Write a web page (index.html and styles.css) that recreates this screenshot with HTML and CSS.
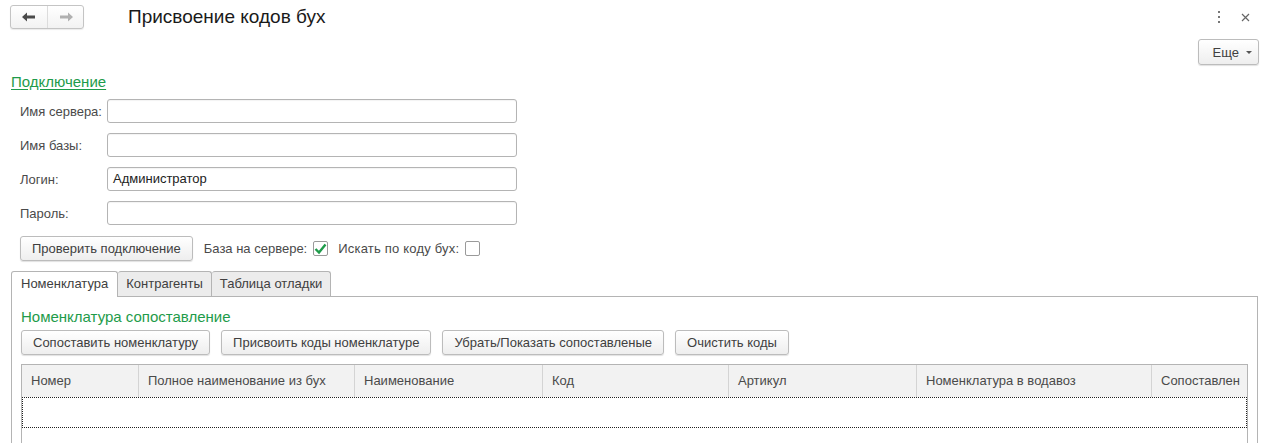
FILE: index.html
```html
<!DOCTYPE html>
<html lang="ru">
<head>
<meta charset="utf-8">
<title>Присвоение кодов бух</title>
<link rel="stylesheet" href="styles.css">
</head>
<body>
<div class="page">
  <header class="topbar">
    <div class="nav">
      <button class="nav-btn back" aria-label="Назад">
        <svg width="14" height="10" viewBox="0 0 14 10"><path d="M0 5 L5 0.5 L5 3.6 L13 3.6 L13 6.4 L5 6.4 L5 9.5 Z" fill="#4a4a4a"/></svg>
      </button>
      <button class="nav-btn fwd" aria-label="Вперед">
        <svg width="14" height="10" viewBox="0 0 14 10"><path d="M14 5 L9 0.5 L9 3.6 L1 3.6 L1 6.4 L9 6.4 L9 9.5 Z" fill="#b0b0b0"/></svg>
      </button>
    </div>
    <h1 class="title">Присвоение кодов бух</h1>
    <div class="win-actions">
      <span class="more-dots">
        <svg width="4" height="12" viewBox="0 0 4 12"><rect x="1" y="0" width="2" height="2" fill="#777"/><rect x="1" y="5" width="2" height="2" fill="#777"/><rect x="1" y="10" width="2" height="2" fill="#777"/></svg>
      </span>
      <span class="close">
        <svg width="9" height="9" viewBox="0 0 9 9"><path d="M1 1 L8 8 M8 1 L1 8" stroke="#666" stroke-width="1.2"/></svg>
      </span>
    </div>
  </header>

  <div class="cmdbar">
    <button class="btn more-btn">Еще <span class="caret"></span></button>
  </div>

  <section class="group">
    <a class="group-title" href="#">Подключение</a>
    <div class="fields">
      <div class="field"><label>Имя сервера:</label><div class="input"></div></div>
      <div class="field"><label>Имя базы:</label><div class="input"></div></div>
      <div class="field"><label>Логин:</label><div class="input">Администратор</div></div>
      <div class="field"><label>Пароль:</label><div class="input"></div></div>
    </div>
    <div class="check-row">
      <button class="btn">Проверить подключение</button>
      <span class="chk-label">База на сервере:</span>
      <span class="checkbox checked">
        <svg width="13" height="12" viewBox="0 0 13 12"><path d="M1.5 6 L5 9.5 L11.5 1.5" fill="none" stroke="#1e9b4a" stroke-width="2.4"/></svg>
      </span>
      <span class="chk-label second">Искать по коду бух:</span>
      <span class="checkbox"></span>
    </div>
  </section>

  <section class="tabs">
    <div class="tab-strip">
      <div class="tab active">Номенклатура</div>
      <div class="tab">Контрагенты</div>
      <div class="tab">Таблица отладки</div>
    </div>
    <div class="tab-panel">
      <div class="panel-title">Номенклатура сопоставление</div>
      <div class="btn-row">
        <button class="btn">Сопоставить номенклатуру</button>
        <button class="btn">Присвоить коды номенклатуре</button>
        <button class="btn">Убрать/Показать сопоставленые</button>
        <button class="btn">Очистить коды</button>
      </div>
      <div class="grid">
        <div class="grid-head">
          <div class="col c1">Номер</div>
          <div class="col c2">Полное наименование из бух</div>
          <div class="col c3">Наименование</div>
          <div class="col c4">Код</div>
          <div class="col c5">Артикул</div>
          <div class="col c6">Номенклатура в водавоз</div>
          <div class="col c7">Сопоставлен</div>
        </div>
        <div class="grid-row"></div>
        <div class="grid-rest"></div>
      </div>
    </div>
  </section>
</div>
</body>
</html>
```

FILE: styles.css
```css
* { box-sizing: border-box; }
html, body { margin: 0; padding: 0; background: #fff; }
body {
  font-family: "Liberation Sans", Arial, sans-serif;
  font-size: 13px;
  color: #4a4a4a;
  width: 1263px;
  height: 443px;
  overflow: hidden;
}

.topbar {
  display: flex;
  align-items: flex-start;
  height: 34px;
  padding: 5px 0 0 10px;
}
.nav {
  display: flex;
  border: 1px solid #c4c4c4;
  border-radius: 3px;
  background: linear-gradient(#ffffff, #f2f2f2);
  box-shadow: 0 1px 1px rgba(0,0,0,0.08);
  height: 24px;
}
.nav-btn {
  height: 22px;
  border: 0;
  background: transparent;
  padding: 0;
  display: flex;
  align-items: center;
  justify-content: center;
}
.nav-btn.back { border-right: 1px solid #dcdcdc; width: 37px; }
.nav-btn.fwd { width: 35px; }
.title {
  margin: 0 0 0 44px;
  font-size: 19px;
  font-weight: normal;
  color: #1a1a1a;
  line-height: 24px;
}
.win-actions {
  margin-left: auto;
  display: flex;
  align-items: center;
  gap: 20px;
  padding-right: 13px;
  height: 24px;
}
.more-dots, .close { display: flex; }

.cmdbar {
  display: flex;
  justify-content: flex-end;
  padding: 5px 4px 0 0;
  height: 70px;
}
.btn {
  font-family: "Liberation Sans", Arial, sans-serif;
  font-size: 13px;
  color: #404040;
  height: 25px;
  padding: 0 12px;
  border: 1px solid #bcbcbc;
  border-radius: 3px;
  background: linear-gradient(#ffffff, #eeeeee);
  box-shadow: 0 1px 1px rgba(0,0,0,0.12);
  line-height: 23px;
  white-space: nowrap;
}
.more-btn {
  height: 26px;
  padding: 0 6px 0 14px;
  display: flex;
  align-items: center;
  gap: 7px;
}
.caret {
  width: 0; height: 0;
  border-left: 3px solid transparent;
  border-right: 3px solid transparent;
  border-top: 3px solid #555;
  margin-top: 1px;
}

.group { padding: 0 0 0 11px; margin-top: -31px; }
.group-title {
  display: inline-block;
  font-size: 15px;
  color: #1e9b4a;
  text-decoration: underline;
  text-underline-offset: 2px;
  line-height: 18px;
  height: 20px;
}
.fields {
  display: flex;
  flex-direction: column;
  gap: 10px;
  margin-top: 6px;
  padding-left: 9px;
}
.field {
  display: flex;
  align-items: center;
  height: 24px;
}
.field label { width: 87px; color: #4a4a4a; }
.input {
  width: 410px;
  height: 24px;
  border: 1px solid #b4b4b4;
  border-radius: 3px;
  background: #fff;
  padding: 0 5px;
  line-height: 22px;
  color: #222;
  box-shadow: inset 0 1px 1px rgba(0,0,0,0.05);
}
.check-row {
  display: flex;
  align-items: center;
  margin-top: 11px;
  padding-left: 9px;
  height: 25px;
}
.check-row .btn { padding: 0 11px; }
.chk-label { margin-left: 11px; color: #4a4a4a; }
.chk-label.second { margin-left: 10px; letter-spacing: 0.2px; }
.checkbox {
  width: 15px;
  height: 15px;
  border: 1px solid #9a9a9a;
  border-radius: 2px;
  margin-left: 6px;
  background: #fff;
  display: flex;
  align-items: center;
  justify-content: center;
}

.tabs { margin-top: 10px; padding-left: 11px; padding-right: 5px; }
.tab-strip { display: flex; height: 25px; }
.tab {
  border: 1px solid #b4b4b4;
  border-bottom: 0;
  border-left: 0;
  background: #ececec;
  padding: 0 8px;
  line-height: 24px;
  color: #404040;
  border-radius: 3px 3px 0 0;
}
.tab:first-child { border-left: 1px solid #b4b4b4; }
.tab.active {
  background: #fff;
  position: relative;
  height: 26px;
  z-index: 1;
  padding: 0 9px;
}
.tab-panel {
  border: 1px solid #b4b4b4;
  border-bottom: 0;
  height: 150px;
  padding: 11px 10px 0 9px;
}
.panel-title {
  font-size: 15px;
  color: #1e9b4a;
  line-height: 18px;
}
.btn-row {
  display: flex;
  gap: 11px;
  margin-top: 4px;
}
.btn-row .btn { padding: 0 11px; }
.grid {
  margin-top: 9px;
  border: 1px solid #b4b4b4;
  border-bottom: 0;
  width: 1227px;
}
.grid-head {
  display: flex;
  height: 32px;
  background: #f2f2f2;
}
.col {
  border-right: 1px solid #d4d4d4;
  padding-left: 9px;
  line-height: 32px;
  color: #4a4a4a;
  white-space: nowrap;
  overflow: hidden;
}
.c1 { width: 117px; }
.c2 { width: 216px; }
.c3 { width: 188px; }
.c4 { width: 186px; }
.c5 { width: 188px; }
.c6 { width: 235px; }
.c7 { flex: 1; border-right: 0; }
.grid-row {
  height: 31px;
  border: 1px dotted #222;
}
.grid-rest { height: 20px; }
```
